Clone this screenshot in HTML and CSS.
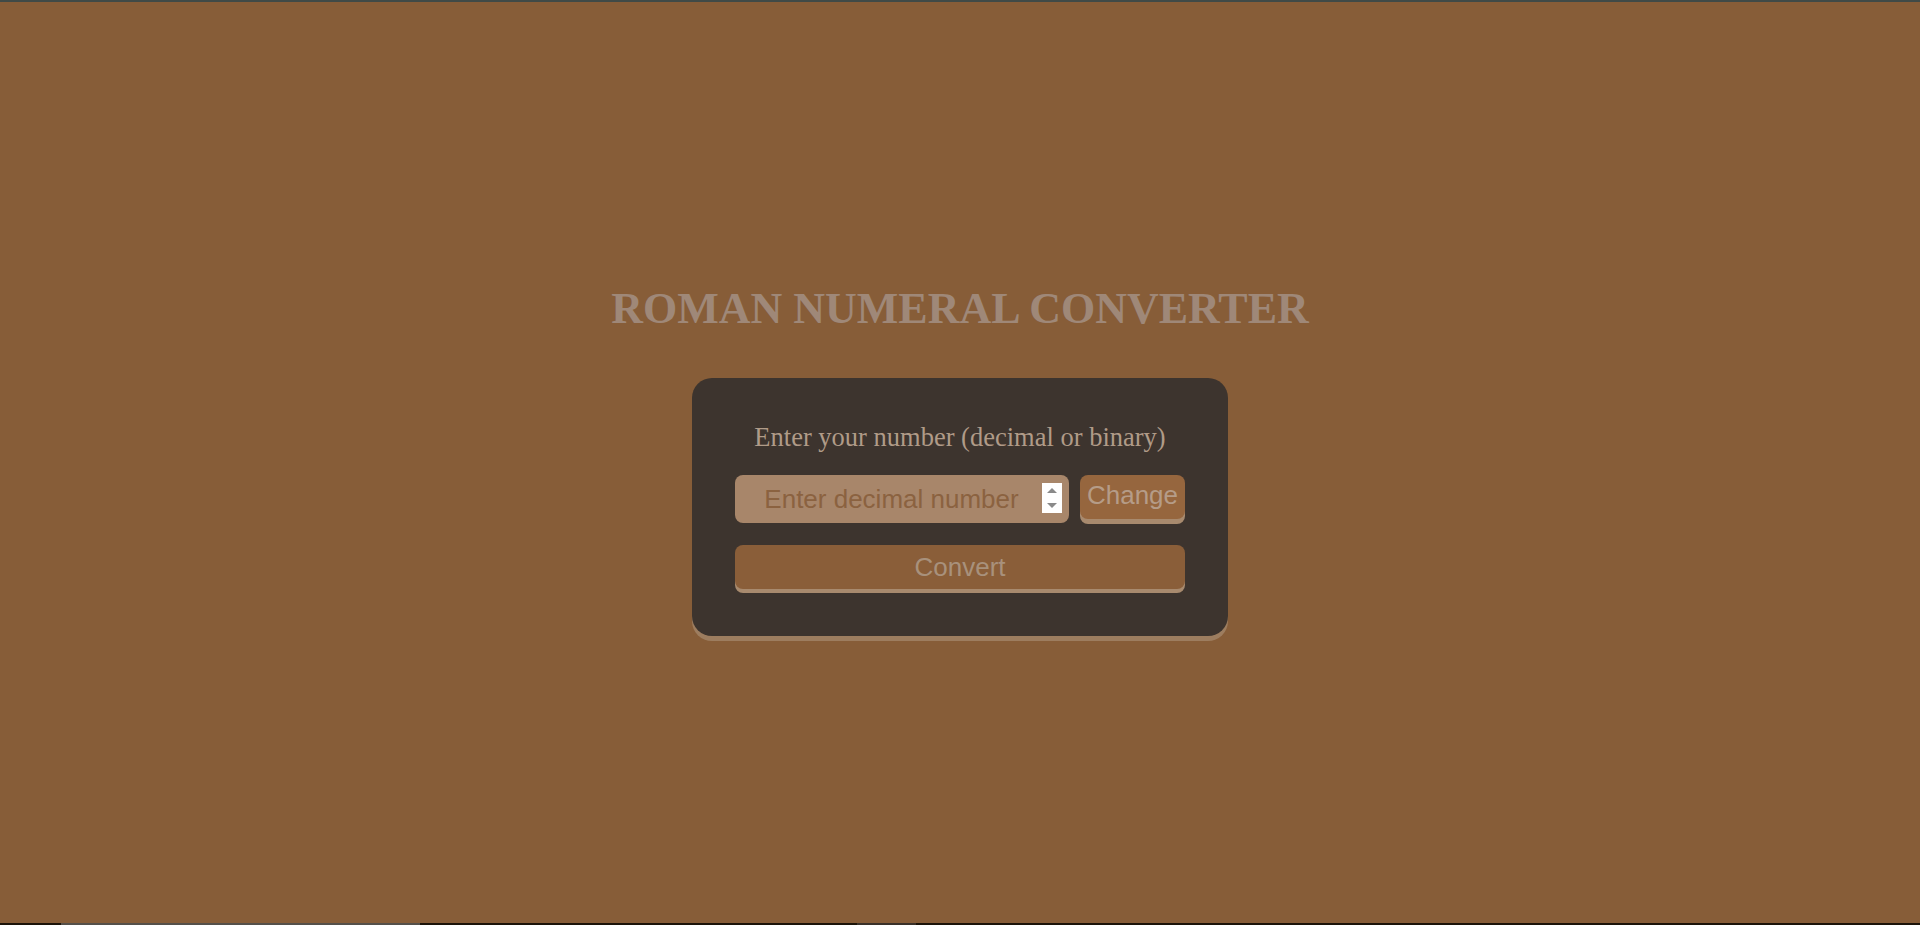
FILE: index.html
```html
<!DOCTYPE html>
<html lang="en">
<head>
<meta charset="utf-8">
<title>Roman Numeral Converter</title>
<link rel="stylesheet" href="styles.css">
</head>
<body>
<div class="page">
  <div class="topline"></div>
  <main class="main">
    <h1 class="title">ROMAN NUMERAL CONVERTER</h1>
    <form class="card" onsubmit="return false;">
      <label class="label" for="number">Enter your number (decimal or binary)</label>
      <div class="row">
        <span class="field-wrap">
          <input class="field" id="number" type="number" placeholder="Enter decimal number">
          <span class="spinner" aria-hidden="true">
            <svg width="20" height="30" viewBox="0 0 20 30">
              <path d="M5 10 L10 5 L15 10 Z" fill="#8a8a8a"/>
              <path d="M5 20 L15 20 L10 25 Z" fill="#8a8a8a"/>
            </svg>
          </span>
        </span>
        <button class="btn btn-change" type="button">Change</button>
      </div>
      <button class="btn btn-convert" type="submit">Convert</button>
    </form>
  </main>
  <div class="bottomline">
    <span class="seg seg-a"></span>
    <span class="seg seg-b"></span>
  </div>
</div>
</body>
</html>
```

FILE: styles.css
```css
* { box-sizing: border-box; }

html, body {
  margin: 0;
  padding: 0;
  height: 100%;
}

body {
  background: #875d38;
  font-family: "Liberation Serif", "Times New Roman", serif;
  overflow: hidden;
}

.page {
  height: 100vh;
  display: flex;
  flex-direction: column;
}

.topline {
  height: 2px;
  background: #404a47;
  flex: none;
}

.bottomline {
  height: 2px;
  background: #1c1409;
  flex: none;
  display: flex;
}

.seg {
  height: 2px;
  background: #55504a;
}

.seg-a {
  margin-left: 61px;
  width: 359px;
}

.seg-b {
  margin-left: 437px;
  width: 59px;
  background: #3a3129;
}

.main {
  flex: 1;
  display: flex;
  flex-direction: column;
  align-items: center;
  justify-content: center;
}

.title {
  margin: 0 0 44px;
  font-size: 44px;
  font-weight: bold;
  color: #9f8878;
  line-height: normal;
}

.card {
  width: 536px;
  background: #3d342e;
  border-radius: 20px;
  box-shadow: 0 5px 0 #9d7d5f;
  padding: 44px 43px 47px;
  margin-bottom: 6px;
  display: flex;
  flex-direction: column;
}

.label {
  text-align: center;
  font-size: 26.5px;
  color: #b09b88;
  line-height: normal;
  margin-bottom: 22px;
}

.row {
  display: flex;
  align-items: flex-start;
  gap: 11px;
  margin-bottom: 22px;
}

.field-wrap {
  position: relative;
  display: block;
  width: 334px;
  height: 48px;
  flex: none;
}

.field {
  display: block;
  width: 100%;
  height: 48px;
  border: none;
  outline: none;
  border-radius: 8px;
  background: #a8866a;
  padding: 9px 28px 9px 7px;
  font-family: "Liberation Sans", Arial, sans-serif;
  font-size: 26px;
  color: #5a3c24;
  text-align: center;
  -moz-appearance: textfield;
}

.field::placeholder {
  color: #8b6240;
}

.field::-webkit-inner-spin-button,
.field::-webkit-outer-spin-button {
  -webkit-appearance: none;
  margin: 0;
}

.spinner {
  position: absolute;
  top: 8px;
  right: 7px;
  width: 20px;
  height: 30px;
  background: #ffffff;
  display: block;
  pointer-events: none;
}

.spinner svg {
  display: block;
}

.btn {
  border: none;
  border-radius: 8px;
  font-family: "Liberation Sans", Arial, sans-serif;
  font-size: 26px;
  line-height: 30px;
  height: 44px;
  padding: 0 6px;
  cursor: pointer;
}

.btn-change {
  flex: 1;
  background: #96663e;
  color: #b59c88;
  box-shadow: 0 5px 0 #a88a6e;
  padding-bottom: 4px;
}

.btn-convert {
  width: 100%;
  background: #8a5e39;
  color: #a8917c;
  box-shadow: 0 4px 0 #a88a6e;
}
```
